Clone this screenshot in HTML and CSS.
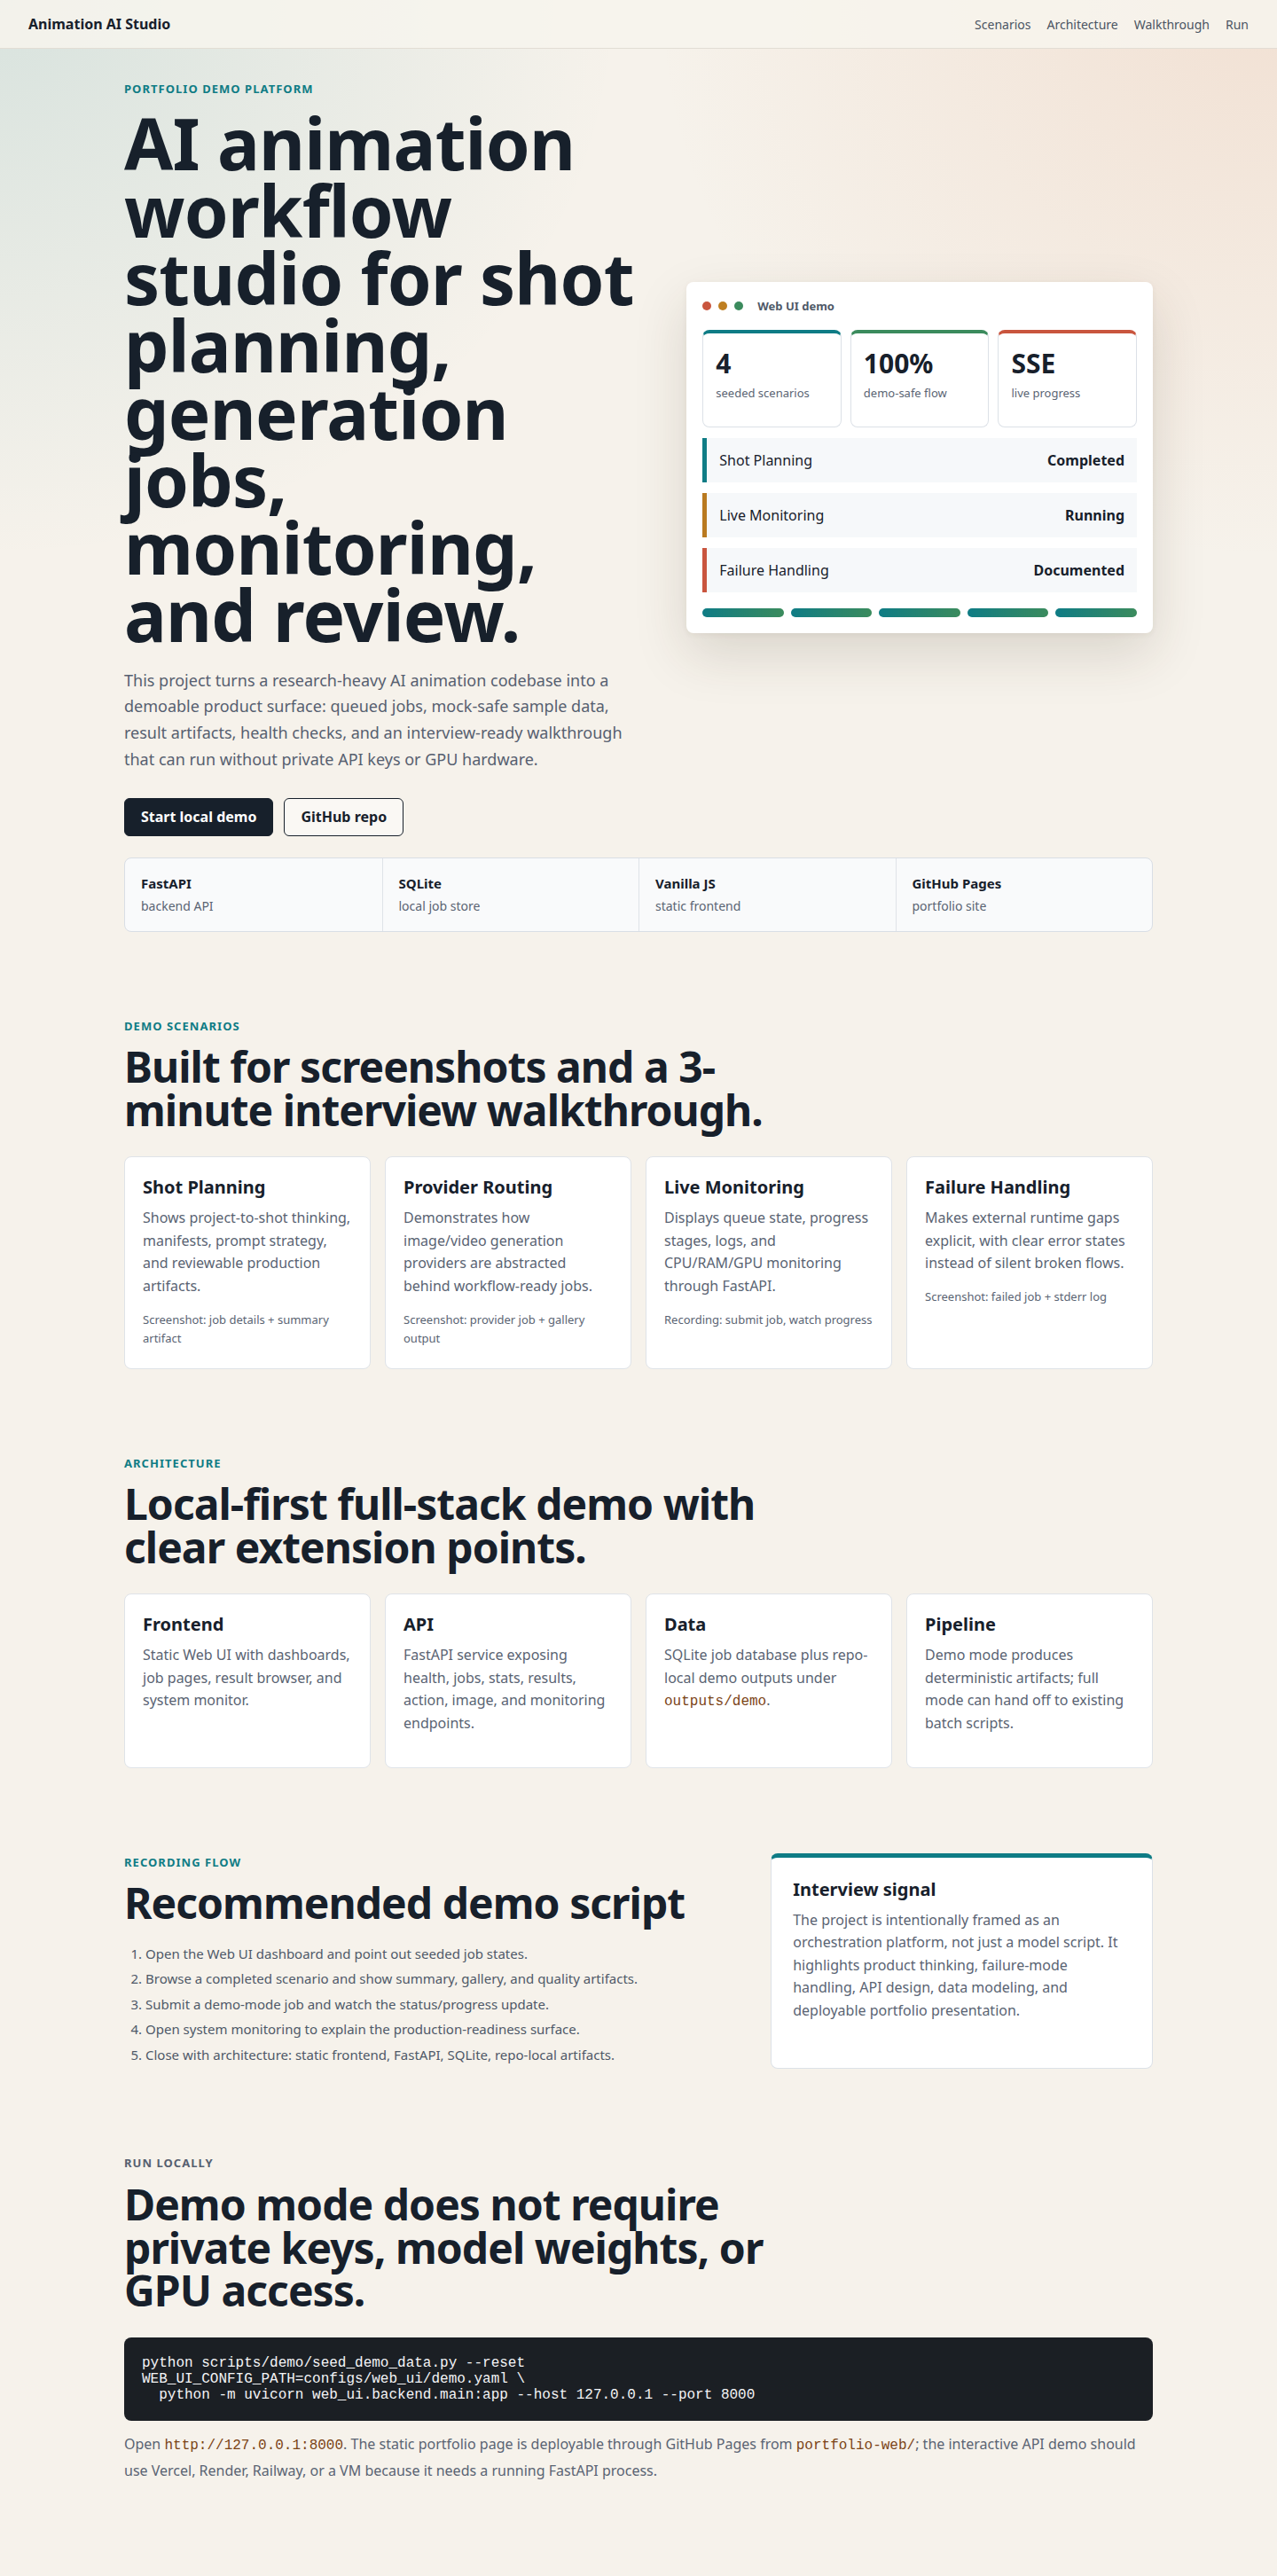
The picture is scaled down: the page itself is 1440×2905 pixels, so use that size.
FILE: index.html
```html
<!DOCTYPE html>
<html lang="en">
<head>
  <meta charset="UTF-8" />
  <meta name="viewport" content="width=device-width, initial-scale=1.0" />
  <title>Animation AI Studio</title>
  <link rel="stylesheet" href="styles.css">
</head>
<body>
  <header class="topbar">
    <a class="brand" href="#">Animation AI Studio</a>
    <nav class="nav-links">
      <a href="#scenarios">Scenarios</a>
      <a href="#architecture">Architecture</a>
      <a href="#walkthrough">Walkthrough</a>
      <a href="#run">Run</a>
    </nav>
  </header>

  <main>
    <section class="hero">
      <div class="wrap hero-grid">
        <div class="hero-copy">
          <p class="eyebrow">Portfolio demo platform</p>
          <h1>AI animation workflow studio for shot planning, generation jobs, monitoring, and review.</h1>
          <p class="lead">This project turns a research-heavy AI animation codebase into a demoable product surface: queued jobs, mock-safe sample data, result artifacts, health checks, and an interview-ready walkthrough that can run without private API keys or GPU hardware.</p>
          <div class="actions">
            <a class="btn btn-dark" href="#run">Start local demo</a>
            <a class="btn btn-ghost" href="#">GitHub repo</a>
          </div>
        </div>

        <div class="demo-window">
          <div class="window-bar">
            <span class="dot red"></span>
            <span class="dot amber"></span>
            <span class="dot green"></span>
            <span class="window-title">Web UI demo</span>
          </div>
          <div class="stats">
            <div class="stat teal"><strong>4</strong><span>seeded scenarios</span></div>
            <div class="stat green"><strong>100%</strong><span>demo-safe flow</span></div>
            <div class="stat red"><strong>SSE</strong><span>live progress</span></div>
          </div>
          <div class="jobs">
            <div class="job teal"><span>Shot Planning</span><b>Completed</b></div>
            <div class="job amber"><span>Live Monitoring</span><b>Running</b></div>
            <div class="job red"><span>Failure Handling</span><b>Documented</b></div>
          </div>
          <div class="bars">
            <span></span><span></span><span></span><span></span><span></span>
          </div>
        </div>
      </div>

      <div class="wrap">
        <div class="stack">
          <div><strong>FastAPI</strong><span>backend API</span></div>
          <div><strong>SQLite</strong><span>local job store</span></div>
          <div><strong>Vanilla JS</strong><span>static frontend</span></div>
          <div><strong>GitHub Pages</strong><span>portfolio site</span></div>
        </div>
      </div>
    </section>

    <section class="section" id="scenarios">
      <div class="wrap">
        <p class="eyebrow">Demo scenarios</p>
        <h2>Built for screenshots and a 3-minute interview walkthrough.</h2>
        <div class="cards">
          <article class="card">
            <h3>Shot Planning</h3>
            <p>Shows project-to-shot thinking, manifests, prompt strategy, and reviewable production artifacts.</p>
            <small>Screenshot: job details + summary artifact</small>
          </article>
          <article class="card">
            <h3>Provider Routing</h3>
            <p>Demonstrates how image/video generation providers are abstracted behind workflow-ready jobs.</p>
            <small>Screenshot: provider job + gallery output</small>
          </article>
          <article class="card">
            <h3>Live Monitoring</h3>
            <p>Displays queue state, progress stages, logs, and CPU/RAM/GPU monitoring through FastAPI.</p>
            <small>Recording: submit job, watch progress</small>
          </article>
          <article class="card">
            <h3>Failure Handling</h3>
            <p>Makes external runtime gaps explicit, with clear error states instead of silent broken flows.</p>
            <small>Screenshot: failed job + stderr log</small>
          </article>
        </div>
      </div>
    </section>

    <section class="section" id="architecture">
      <div class="wrap">
        <p class="eyebrow">Architecture</p>
        <h2>Local-first full-stack demo with clear extension points.</h2>
        <div class="cards">
          <article class="card">
            <h3>Frontend</h3>
            <p>Static Web UI with dashboards, job pages, result browser, and system monitor.</p>
          </article>
          <article class="card">
            <h3>API</h3>
            <p>FastAPI service exposing health, jobs, stats, results, action, image, and monitoring endpoints.</p>
          </article>
          <article class="card">
            <h3>Data</h3>
            <p>SQLite job database plus repo-local demo outputs under <code>outputs/demo</code>.</p>
          </article>
          <article class="card">
            <h3>Pipeline</h3>
            <p>Demo mode produces deterministic artifacts; full mode can hand off to existing batch scripts.</p>
          </article>
        </div>
      </div>
    </section>

    <section class="section" id="walkthrough">
      <div class="wrap flow-grid">
        <div>
          <p class="eyebrow">Recording flow</p>
          <h2>Recommended demo script</h2>
          <ol class="steps">
            <li>Open the Web UI dashboard and point out seeded job states.</li>
            <li>Browse a completed scenario and show summary, gallery, and quality artifacts.</li>
            <li>Submit a demo-mode job and watch the status/progress update.</li>
            <li>Open system monitoring to explain the production-readiness surface.</li>
            <li>Close with architecture: static frontend, FastAPI, SQLite, repo-local artifacts.</li>
          </ol>
        </div>
        <aside class="signal">
          <h3>Interview signal</h3>
          <p>The project is intentionally framed as an orchestration platform, not just a model script. It highlights product thinking, failure-mode handling, API design, data modeling, and deployable portfolio presentation.</p>
        </aside>
      </div>
    </section>

    <section class="section last" id="run">
      <div class="wrap">
        <p class="eyebrow muted">Run locally</p>
        <h2>Demo mode does not require private keys, model weights, or GPU access.</h2>
<pre class="code">python scripts/demo/seed_demo_data.py --reset
WEB_UI_CONFIG_PATH=configs/web_ui/demo.yaml \
  python -m uvicorn web_ui.backend.main:app --host 127.0.0.1 --port 8000</pre>
        <p class="note">Open <code>http://127.0.0.1:8000</code>. The static portfolio page is deployable through GitHub Pages from <code>portfolio-web/</code>; the interactive API demo should use Vercel, Render, Railway, or a VM because it needs a running FastAPI process.</p>
      </div>
    </section>
  </main>
</body>
</html>
```

FILE: styles.css
```css
body {
  margin: 0;
  font-family: "Noto Sans", sans-serif;
  color: #17202b;
  background:
    radial-gradient(ellipse 1000px 900px at 0 0, rgba(15, 124, 133, 0.13), transparent 70%),
    radial-gradient(ellipse 1000px 900px at 100% 0, rgba(222, 150, 110, 0.19), transparent 70%),
    #f6f2eb;
  background-repeat: no-repeat;
  background-color: #f6f2eb;
}
a {
  color: inherit;
  text-decoration: none;
}
.wrap {
  max-width: 1160px;
  margin: 0 auto;
}

/* top bar */
.topbar {
  display: flex;
  align-items: center;
  justify-content: space-between;
  height: 55px;
  box-sizing: border-box;
  padding: 0 32px;
  background: rgba(247, 244, 237, 0.85);
  border-bottom: 1px solid #e2ddd4;
}
.brand {
  font-weight: 700;
  font-size: 16px;
}
.nav-links {
  display: flex;
  gap: 18px;
  font-size: 14px;
}
.nav-links a {
  color: #4b5563;
}

/* shared text */
.eyebrow {
  margin: 0 0 12px;
  font-size: 13px;
  line-height: 1.6;
  font-weight: 700;
  letter-spacing: 0.08em;
  text-transform: uppercase;
  color: #0f7c85;
}
.eyebrow.muted {
  color: #566070;
}
h1 {
  margin: 0 0 22px;
  font-size: 80px;
  line-height: 0.95;
  letter-spacing: -0.01em;
}
h2 {
  max-width: 760px;
  margin: 0 0 28px;
  font-size: 48px;
  line-height: 1.01;
  letter-spacing: -0.02em;
}
h3 {
  margin: 0 0 10px;
  font-size: 20px;
  line-height: 1.2;
}
code {
  font-family: "Liberation Mono", monospace;
  font-size: 16px;
  color: #7b4416;
}

/* hero */
.hero {
  padding: 35px 0 48px;
}
.hero-grid {
  display: grid;
  grid-template-columns: minmax(0, 1.1fr) minmax(0, 1fr);
  gap: 56px;
  align-items: center;
}
.lead {
  margin: 0 0 28px;
  font-size: 18px;
  line-height: 1.65;
  color: #566070;
}
.actions {
  display: flex;
  gap: 12px;
}
.btn {
  padding: 10px 18px;
  border: 1px solid #17202b;
  border-radius: 6px;
  font-size: 16px;
  line-height: 21px;
  font-weight: 700;
}
.btn-dark {
  background: #17202b;
  color: #fff;
}
.btn-ghost {
  background: #faf8f4;
}

/* demo window */
.demo-window {
  background: #fff;
  border-radius: 8px;
  padding: 18px;
  box-shadow: 0 24px 60px rgba(60, 48, 30, 0.15), 0 2px 6px rgba(60, 48, 30, 0.06);
}
.window-bar {
  display: flex;
  align-items: center;
  gap: 8px;
  height: 18px;
  margin-bottom: 18px;
}
.dot {
  width: 10px;
  height: 10px;
  border-radius: 50%;
}
.dot.red { background: #c9553e; }
.dot.amber { background: #bf7f21; }
.dot.green { background: #3b8b5d; }
.window-title {
  margin-left: 8px;
  font-size: 13px;
  font-weight: 700;
  color: #4f5968;
}
.stats {
  display: grid;
  grid-template-columns: repeat(3, 1fr);
  gap: 10px;
  margin-bottom: 12px;
}
.stat {
  min-height: 110px;
  box-sizing: border-box;
  padding: 16px 14px;
  border: 1px solid #dce1e7;
  border-top: 4px solid;
  border-radius: 8px;
}
.stat.teal { border-top-color: #0f7c85; }
.stat.green { border-top-color: #3b8b5d; }
.stat.red { border-top-color: #c9553e; }
.stat strong {
  display: block;
  font-size: 30px;
  line-height: 1.2;
}
.stat span {
  display: block;
  margin-top: 6px;
  font-size: 13px;
  line-height: 1.4;
  color: #5a6473;
}
.jobs {
  display: flex;
  flex-direction: column;
  gap: 12px;
}
.job {
  display: flex;
  align-items: center;
  justify-content: space-between;
  height: 50px;
  padding: 0 14px;
  background: #f6f8fa;
  border-left: 5px solid;
  font-size: 16px;
}
.job.teal { border-left-color: #0f7c85; }
.job.amber { border-left-color: #b97a20; }
.job.red { border-left-color: #c9553e; }
.bars {
  display: flex;
  gap: 8px;
  margin-top: 18px;
}
.bars span {
  flex: 1;
  height: 10px;
  border-radius: 999px;
  background: linear-gradient(90deg, #0f7c85, #3b8b5d);
}

/* stack strip */
.stack {
  display: grid;
  grid-template-columns: repeat(4, 1fr);
  margin-top: 24px;
  background: #f9fafb;
  border: 1px solid #d9dee5;
  border-radius: 8px;
}
.stack div {
  padding: 18px;
  border-left: 1px solid #dfe3e8;
}
.stack div:first-child {
  border-left: none;
}
.stack strong {
  display: block;
  font-size: 15px;
  line-height: 21px;
}
.stack span {
  display: block;
  margin-top: 4px;
  font-size: 14px;
  line-height: 21px;
  color: #5a6473;
}

/* sections */
.section {
  padding: 48px 0;
}
.section.last {
  padding-bottom: 116px;
}
.cards {
  display: grid;
  grid-template-columns: repeat(4, 1fr);
  gap: 16px;
}
.card {
  padding: 22px 20px;
  background: #fff;
  border: 1px solid #dfe3e8;
  border-radius: 8px;
}
.card p {
  margin: 0 0 14px;
  font-size: 16px;
  line-height: 1.6;
  color: #5a6473;
}
.card small {
  display: block;
  font-size: 13px;
  line-height: 1.65;
  color: #5a6473;
}

/* walkthrough */
.flow-grid {
  display: grid;
  grid-template-columns: minmax(0, 1.6fr) minmax(0, 1fr);
  gap: 40px;
}
.flow-grid h2 {
  margin-bottom: 20px;
}
.steps {
  margin: 0;
  padding-left: 24px;
  font-size: 15px;
  line-height: 1.7;
  color: #4f5968;
}
.steps li {
  margin-bottom: 3px;
}
.signal {
  padding: 24px;
  background: #fff;
  border: 1px solid #dce1e7;
  border-top: 5px solid #0f7c85;
  border-radius: 8px;
}
.signal p {
  margin: 0;
  font-size: 16px;
  line-height: 1.6;
  color: #5a6473;
}

/* run locally */
.code {
  margin: 0 0 12px;
  padding: 20px;
  background: #1b1f24;
  color: #f3f4f6;
  border-radius: 8px;
  font-family: "Liberation Mono", monospace;
  font-size: 16px;
}
.note {
  margin: 0;
  font-size: 16px;
  line-height: 1.8;
  color: #5a6473;
}
```
